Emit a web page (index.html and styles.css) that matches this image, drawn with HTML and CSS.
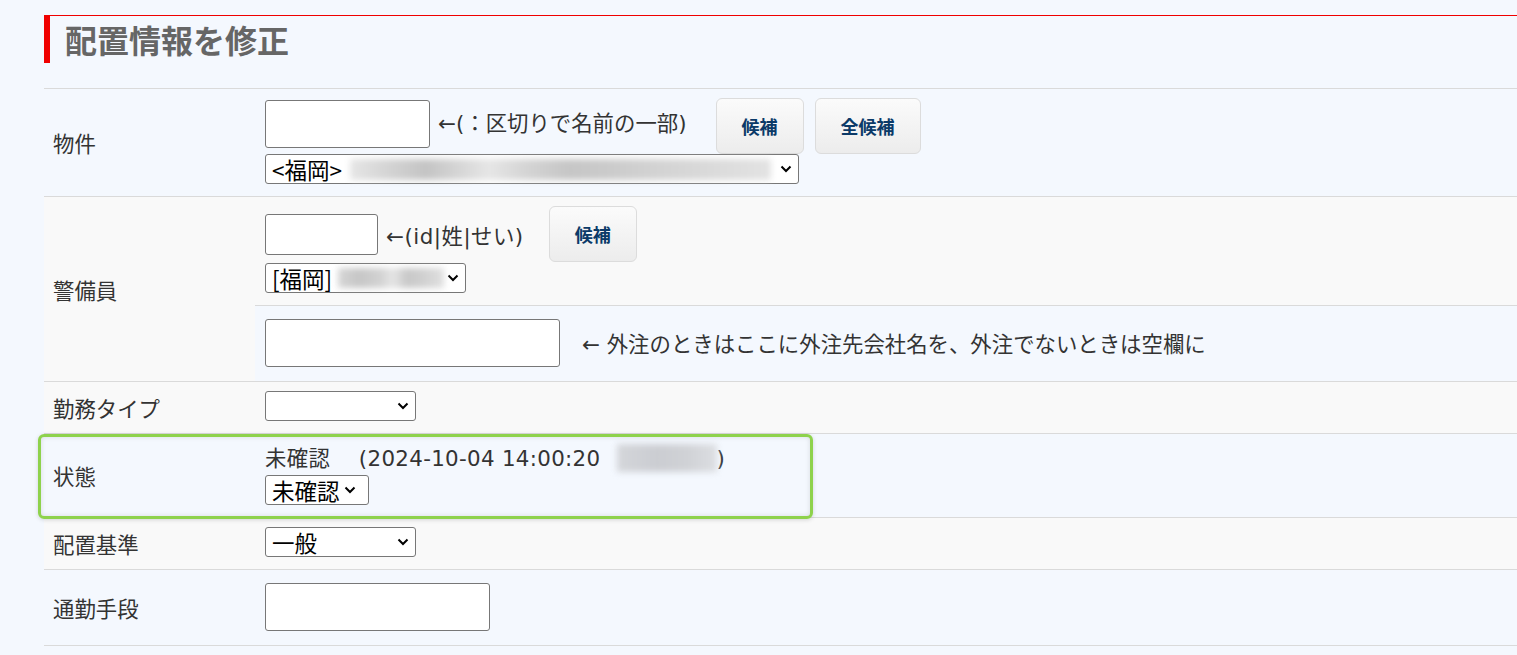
FILE: index.html
```html
<!DOCTYPE html>
<html lang="ja">
<head>
<meta charset="utf-8">
<title>配置情報を修正</title>
<link rel="stylesheet" href="styles.css">
</head>
<body>
<div class="page">
  <h1 class="title">配置情報を修正</h1>
  <div class="form-wrap">
    <table class="form-table">
      <tbody>
        <tr>
          <th>物件</th>
          <td>
            <div class="line line-top">
              <input class="inp inp-prop" type="text">
              <span class="hint">←(：区切りで名前の一部)</span>
              <button class="btn btn-first" type="button">候補</button>
              <button class="btn btn-next" type="button">全候補</button>
            </div>
            <div class="sel sel-prop">
              <span class="sel-text">&lt;福岡&gt;</span>
              <span class="blur blur-prop"></span>
              <svg class="chev" viewBox="0 0 12 8" width="12" height="8"><polyline points="1.5,1.5 6,6 10.5,1.5"/></svg>
            </div>
          </td>
        </tr>
        <tr>
          <th rowspan="2">警備員</th>
          <td>
            <div class="line line-guard">
              <input class="inp inp-guard" type="text">
              <span class="hint hint-guard">←(id|姓|せい)</span>
              <button class="btn btn-guard" type="button">候補</button>
            </div>
            <div class="sel sel-guard">
              <span class="sel-text">[福岡]</span>
              <span class="blur blur-guard"></span>
              <svg class="chev" viewBox="0 0 12 8" width="12" height="8"><polyline points="1.5,1.5 6,6 10.5,1.5"/></svg>
            </div>
          </td>
        </tr>
        <tr>
          <td>
            <div class="line">
              <input class="inp inp-out" type="text">
              <span class="hint hint-out">← 外注のときはここに外注先会社名を、外注でないときは空欄に</span>
            </div>
          </td>
        </tr>
        <tr>
          <th>勤務タイプ</th>
          <td>
            <div class="sel sel-mid">
              <span class="sel-text"></span>
              <svg class="chev" viewBox="0 0 12 8" width="12" height="8"><polyline points="1.5,1.5 6,6 10.5,1.5"/></svg>
            </div>
          </td>
        </tr>
        <tr>
          <th>状態</th>
          <td>
            <div class="status-text">未確認　 (2024-10-04 14:00:20 <span class="blur blur-status"></span>)</div>
            <div class="sel sel-status">
              <span class="sel-text">未確認</span>
              <svg class="chev" viewBox="0 0 12 8" width="12" height="8"><polyline points="1.5,1.5 6,6 10.5,1.5"/></svg>
            </div>
          </td>
        </tr>
        <tr>
          <th>配置基準</th>
          <td>
            <div class="sel sel-mid">
              <span class="sel-text">一般</span>
              <svg class="chev" viewBox="0 0 12 8" width="12" height="8"><polyline points="1.5,1.5 6,6 10.5,1.5"/></svg>
            </div>
          </td>
        </tr>
        <tr>
          <th>通勤手段</th>
          <td><input class="inp inp-commute" type="text"></td>
        </tr>
      </tbody>
    </table>
    <div class="highlight"></div>
  </div>
</div>
</body>
</html>
```

FILE: styles.css
```css
html, body {
  margin: 0;
  padding: 0;
  background: #f4f8fe;
}
body {
  font-family: "DejaVu Sans", "Noto Sans CJK JP", sans-serif;
  color: #333;
}
.page {
  padding: 15px 0 0 44px;
}
.title {
  margin: 0;
  height: 47px;
  border-top: 1px solid #f00000;
  border-left: 6px solid #f00000;
  padding-left: 15px;
  font-family: "Noto Sans CJK JP", sans-serif;
  font-size: 32px;
  font-weight: 700;
  line-height: 46px;
  color: #666;
}
.form-wrap {
  position: relative;
  margin-top: 25px;
}
.form-table {
  width: 100%;
  border-collapse: collapse;
}
.form-table th,
.form-table td {
  border-top: 1px solid #dadada;
  border-bottom: 1px solid #dadada;
}
.form-table tr:nth-child(even) {
  background: #f9f9f9;
}
.form-table th {
  width: 193px;
  padding: 0 9px;
  text-align: left;
  font-weight: 400;
  font-size: 21.4px;
  vertical-align: middle;
  color: #333;
}
.form-table td {
  padding: 9px 10px 12px;
  font-size: 21.4px;
  vertical-align: top;
}
.line {
  display: flex;
  align-items: center;
}
.line-top {
  align-items: flex-start;
}
.line-top .inp-prop {
  margin-top: 2px;
}
.line-top .hint {
  line-height: 48px;
  margin-top: 2px;
}
.inp {
  box-sizing: border-box;
  height: 48px;
  background: #fff;
  border: 1px solid #777;
  border-radius: 3px;
  padding: 0 6px;
  font-size: 20px;
  font-family: inherit;
}
.inp-prop { width: 165px; }
.inp-guard { width: 113px; height: 41px; }
.inp-out { width: 295px; margin: 4px 0 2px; }
.inp-commute { width: 225px; margin: 4px 0 2px; display: block; }
.hint {
  margin-left: 8px;
  white-space: nowrap;
  color: #333;
}
.hint-guard {
  letter-spacing: 0.5px;
}
.hint-out {
  margin-left: 22px;
}
.btn {
  box-sizing: border-box;
  height: 56px;
  padding: 0 25px;
  border: 1px solid #dcdcdc;
  border-radius: 6px;
  background: linear-gradient(#fbfbfb, #ececec);
  font-family: "Noto Sans CJK JP", sans-serif;
  font-size: 18px;
  font-weight: 700;
  color: #0b3a68;
  cursor: pointer;
}
.btn-first { margin-left: 29px; }
.btn-next { margin-left: 11px; }
.btn-guard { margin-left: 25px; }
.line-guard { margin-bottom: 1px; }
.sel {
  box-sizing: border-box;
  height: 30px;
  display: flex;
  align-items: center;
  background: #fff;
  border: 1px solid #777;
  border-radius: 3px;
  padding: 0 6px 0 6px;
  font-family: "Noto Sans CJK JP", sans-serif;
  font-size: 22.5px;
  line-height: 28px;
  color: #000;
}
.sel-text {
  white-space: nowrap;
}
.chev {
  margin-left: auto;
  flex: none;
  fill: none;
  stroke: #000;
  stroke-width: 2;
}
.sel-prop { width: 534px; }
.sel-guard { width: 201px; }
.sel-mid { width: 151px; }
.sel-status { width: 104px; padding-right: 5px; }
.sel-status .chev { margin-left: 4px; }
.blur {
  display: inline-block;
  filter: blur(3px);
  flex: none;
}
.blur-prop {
  margin-left: 8px;
  width: 421px;
  height: 21px;
  background: linear-gradient(90deg, #e6e6e6 0%, #d2d2d2 10%, #c4c4c4 18%, #d8d8d8 27%, #e6e6e6 33%, #d4d4d4 42%, #c6c6c6 52%, #cbcbcb 62%, #d2d2d2 72%, #d9d9d9 84%, #e3e3e3 100%);
}
.blur-guard {
  margin-left: 6px;
  width: 106px;
  height: 20px;
  background: linear-gradient(90deg, #d6d6d6 0%, #c6c6c6 20%, #d2d2d2 40%, #e6e6e6 52%, #c8c8c8 65%, #d0d0d0 80%, #e0e0e0 100%);
}
.status-text {
  line-height: 32px;
  white-space: nowrap;
  color: #333;
  letter-spacing: 0.3px;
}
.blur-status {
  width: 100px;
  height: 28px;
  vertical-align: middle;
  margin: -4px 0 0 9px;
  background: linear-gradient(90deg, #d4d6da 0%, #cbcdd2 40%, #d0d2d6 70%, #dcdee2 100%);
}
.highlight {
  position: absolute;
  left: -6px;
  top: 346px;
  width: 775px;
  height: 85px;
  box-sizing: border-box;
  border: 3px solid #8ed24c;
  border-radius: 6px;
  box-shadow: inset 0 0 5px rgba(0, 0, 0, 0.12), 0 1px 4px rgba(0, 0, 0, 0.15);
  pointer-events: none;
}
```
